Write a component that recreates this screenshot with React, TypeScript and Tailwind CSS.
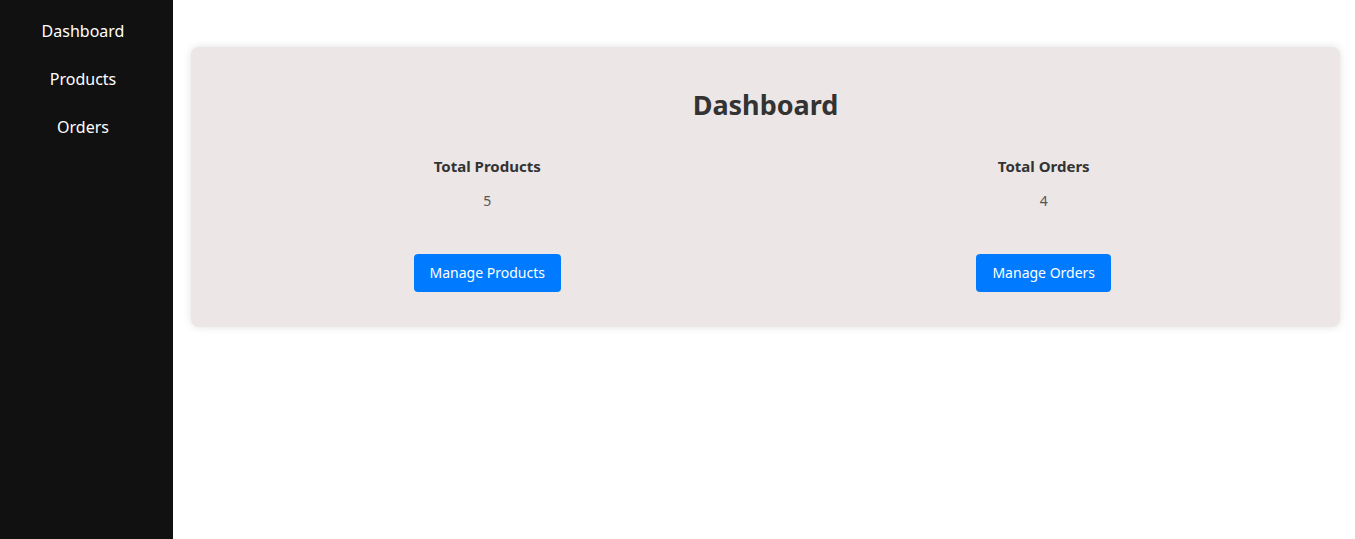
const navItems = ["Dashboard", "Products", "Orders"];

const stats = [
  { label: "Total Products", value: 5, action: "Manage Products" },
  { label: "Total Orders", value: 4, action: "Manage Orders" },
];

export default function App() {
  return (
    <div className="flex min-h-[539px] w-full bg-white font-['Noto_Sans','Open_Sans',sans-serif]">
      <aside className="w-[173px] shrink-0 bg-[#111111] pt-[7px] pr-[7px]">
        <nav className="flex flex-col">
          {navItems.map((item) => (
            <a key={item} href="#" className="block py-3 text-center text-base leading-6 text-white">
              {item}
            </a>
          ))}
        </nav>
      </aside>

      <main className="flex-1 pt-[47px] pl-[18px] pr-[15px]">
        <div className="rounded-lg bg-[#ece6e6] px-[18px] pt-[41px] pb-[35px] shadow-[0_0_8px_rgba(0,0,0,0.12)]">
          <h1 className="text-center text-[27px] font-bold leading-[34px] text-[#333333]">Dashboard</h1>
          <div className="mt-[34px] grid grid-cols-2">
            {stats.map((s) => (
              <div key={s.label} className="flex flex-col items-center">
                <h3 className="text-[15px] font-bold leading-5 text-[#333333]">{s.label}</h3>
                <p className="mt-[15px] text-sm leading-5 text-[#555555]">{s.value}</p>
                <button
                  type="button"
                  className="mt-[43px] h-[38px] rounded bg-[#007bff] px-4 text-sm leading-5 text-white"
                >
                  {s.action}
                </button>
              </div>
            ))}
          </div>
        </div>
      </main>
    </div>
  );
}
